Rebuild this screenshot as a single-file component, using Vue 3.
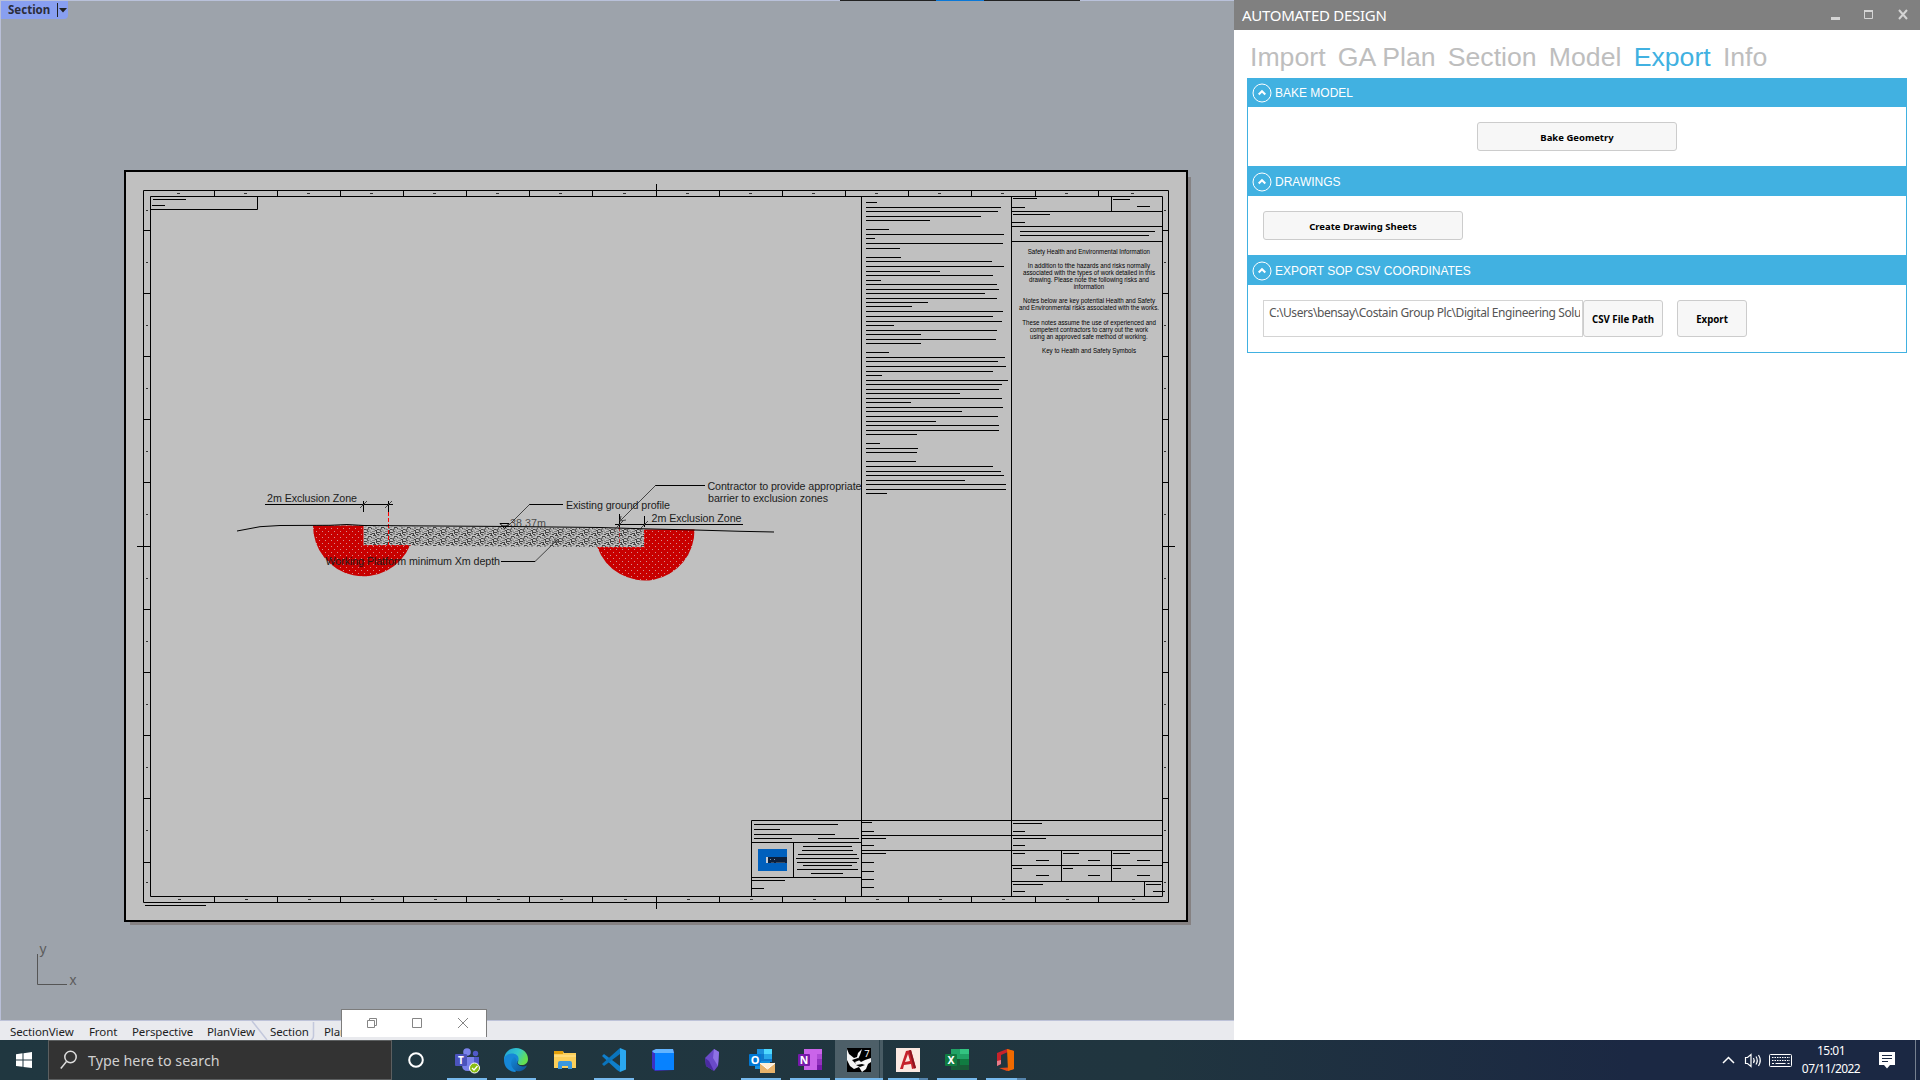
<script setup>
// Column and row divisions of the sheet border
const colTicks = [214, 277, 340, 403, 466, 529, 592, 656, 719, 782, 845, 908, 971, 1035, 1098]
const colMarks = [179, 246, 309, 372, 435, 498, 561, 625, 688, 751, 814, 877, 940, 1003, 1067, 1133]
const rowTicks = [230, 293, 356, 419, 482, 546, 609, 672, 735, 798, 862]
const rowMarks = [210, 262, 325, 388, 451, 514, 578, 641, 704, 767, 830, 882]

// Greeked note lines: [y, x start, x end]
const notes = [
  [202, 866, 877], [207, 866, 1001], [211, 866, 998], [216, 866, 981], [220, 866, 930],
  [229, 866, 889], [234, 866, 1004], [238, 866, 875], [243, 866, 1003], [248, 866, 900],
  [257, 866, 901], [261, 866, 992], [266, 866, 1004], [271, 866, 940], [275, 866, 993],
  [280, 866, 881], [284, 866, 997], [289, 866, 999], [293, 866, 985], [298, 866, 997],
  [302, 866, 928], [306, 866, 912], [311, 866, 1003], [316, 866, 993], [321, 866, 1002],
  [325, 866, 894], [330, 866, 997], [334, 866, 921], [339, 866, 996], [343, 866, 921],
  [352, 866, 889], [357, 866, 1005], [361, 866, 998], [366, 866, 1006], [371, 866, 993],
  [375, 866, 882], [380, 866, 1008], [384, 866, 1002], [389, 866, 999], [393, 866, 960],
  [398, 866, 1002], [402, 866, 911], [407, 866, 1003], [411, 866, 962], [416, 866, 998],
  [421, 866, 936], [425, 866, 999], [430, 866, 999], [434, 866, 917],
  [443, 866, 880], [448, 866, 918], [452, 866, 917],
  [461, 866, 916], [466, 866, 993], [471, 866, 1001], [475, 866, 1004], [480, 866, 965],
  [484, 866, 1006], [489, 866, 1006], [493, 866, 887],
]
const fields = [
  [199, 153, 186], [205, 152, 165], [905, 145, 206],
  [198, 1013, 1037], [207, 1012, 1025], [199, 1113, 1130], [206, 1137, 1150],
  [214, 1013, 1050], [222, 1012, 1025], [231, 1020, 1155], [235, 1020, 1149],
  [824, 754, 838], [829, 754, 780], [834, 754, 835], [838, 754, 792], [838, 818, 859],
  [846, 803, 852], [850, 802, 853], [854, 798, 857], [858, 796, 859], [862, 797, 857],
  [865, 803, 852], [869, 797, 858], [873, 811, 843], [880, 752, 785], [888, 752, 764],
  [822, 862, 872], [831, 862, 874], [838, 862, 886], [845, 862, 874], [853, 862, 886],
  [862, 862, 874], [871, 862, 874], [879, 862, 874], [887, 862, 874],
  [823, 1013, 1042], [831, 1013, 1025], [838, 1013, 1046], [845, 1013, 1025],
  [853, 1013, 1025], [853, 1063, 1079], [853, 1113, 1130],
  [860, 1036, 1049], [860, 1088, 1100], [860, 1137, 1150],
  [868, 1013, 1022], [868, 1063, 1073], [868, 1113, 1121],
  [875, 1036, 1049], [875, 1088, 1100], [875, 1137, 1150],
  [884, 1013, 1043], [891, 1013, 1025], [884, 1146, 1161], [891, 1153, 1165],
]
const safety = [
  [254, 1027.7, 122.3, 'Safety Health and Environmental Information'],
  [268, 1027.7, 122.3, 'In addition to tthe hazards and risks normally'],
  [275.3, 1023, 132, 'associated with the types of work detailed in this'],
  [282.3, 1029, 120, 'drawing. Please note the following risks and'],
  [289.3, 1073.7, 30.5, 'information'],
  [303.3, 1023, 132, 'Notes below are key potential Health and Safety'],
  [310.3, 1019, 140, 'and Environmental risks associated with the works.'],
  [324.6, 1022.3, 133.7, 'These notes assume the use of experienced and'],
  [331.6, 1029.7, 118.3, 'competent contractors to carry out the work'],
  [338.9, 1030, 117.7, 'using an approved safe method of working.'],
  [352.9, 1042, 94, 'Key to Health and Safety Symbols'],
]
const dash = (list) => list.map(([y, a, b]) => `M${a} ${y}.5H${b}`).join('')
const colPath = colTicks.map((x) => `M${x}.5 190V197M${x}.5 896V902`).join('')
const rowPath = rowTicks.map((y) => `M143 ${y}.5H150M1162 ${y}.5H1168`).join('')
const markPath =
  colMarks.map((x) => `M${x - 2} 193.5h3M${x - 1} 899.5h3`).join('') +
  rowMarks.map((y) => `M146 ${y}.5h2M1164 ${y}.5h2`).join('')

const tabs = ['Import', 'GA Plan', 'Section', 'Model', 'Export', 'Info']
const views = [
  ['SectionView', 79], ['Front', 43], ['Perspective', 75], ['PlanView', 63], ['Section', 54], ['Plan', 30],
]
const apps = [
  { id: 'cortana' }, { id: 'teams', open: true }, { id: 'edge', open: true }, { id: 'files' },
  { id: 'code', open: true }, { id: 'cube' }, { id: 'gem' }, { id: 'outlook', open: true },
  { id: 'onenote', open: true }, { id: 'rhino', open: true, active: true },
  { id: 'acad', open: true, stack: true }, { id: 'excel', open: true }, { id: 'office', open: true, stack: true },
]
</script>

<template>
  <div class="screen">
    <div class="work">
      <section class="viewport">
        <div class="edge-strip"><i></i><b></b><i></i></div>
        <svg class="canvas" width="1234" height="1019" viewBox="0 1 1234 1019">
          <defs>
            <pattern id="dots" width="6" height="6" patternUnits="userSpaceOnUse">
              <rect width="6" height="6" fill="#c80000" />
              <path d="M1 0h1v1h-1zM4 3h1v1h-1z" fill="#d39090" />
            </pattern>
            <pattern id="hatch" width="13" height="9" patternUnits="userSpaceOnUse">
              <path d="M0 1.5h3l2 2M6 .5l2 2h3M12.500 0v3M1 5.5l2-2M4 5.5h3l1 2M9 4.5h3M0 7.5h2l2 1.500M6 8.500l-1-1M9 6.500l2 2h2M10.500 3v2M3 0l2 1M0 3.500h2M6 3.500h2M5 6.500l-2 1M12 5v2M8 0h3" fill="none" stroke="#444" stroke-width="1" />
            </pattern>
            <clipPath id="drawing"><rect x="150" y="196" width="711" height="700" /></clipPath>
          </defs>
          <path d="M1188 177h3v748H130v-3h1058z" fill="#858182" />
          <rect x="125" y="171" width="1062" height="750" fill="#c0c0c0" stroke="#000" stroke-width="2" />

          <g class="ink">
            <path d="M143.5 190.500H1168.500V902.500H143.500zM150.500 196.500H1162.500V896.500H150.500z" />
            <path :d="colPath + rowPath" />
            <path d="M656.500 184V197M656.500 896V909M137 546.500H150M1162 546.500H1175" />
            <path d="M150 209.500H257.500V196" />
            <path d="M861.500 196V896M1011.500 196V896M1011 211.500H1162M1111.500 196V211M1011 226.500H1162M1011 241.500H1162" />
            <path d="M751.500 896V820.500H1162M861 835.500H1162M861 850.500H1162M751 842.500H861M751 877.500H861M793.500 842V877" />
            <path d="M1011 865.500H1162M1011 881.500H1162M1061.500 850V881M1111.500 850V881M1144.500 881V896" />
            <path :d="dash(notes)" /><path :d="dash(fields)" />
            <path :d="markPath" opacity=".75" />
          </g>
          <rect x="758" y="849" width="29" height="22" fill="#0060bd" />
          <path d="M766 857h2v6h-2z" fill="#c8ccd2" />
          <path d="M768 857h19v6h-19z" fill="#0c203c" />
          <path d="M770 859h1v1h-1zM774 859h1v1h-1z" fill="#8895a8" />
          <path d="M771 862h3v1h-3zM776 862h9v1h-9z" fill="#3c4b62" />

          <g class="safety">
            <text v-for="s in safety" :key="s[0]" :x="s[1]" :y="s[0]" :textLength="s[2]" lengthAdjust="spacingAndGlyphs">{{ s[3] }}</text>
          </g>

          <g clip-path="url(#drawing)">
            <path d="M313 525.500H363.500V545.500H410A50.500 50.500 0 0 1 313 525.500z" fill="url(#dots)" />
            <path d="M644.500 529.500H694.500A50 50 0 0 1 597.500 547.500H644.500z" fill="url(#dots)" />
            <path d="M364 526.500L644 528.500V547.500L364 545.500z" fill="url(#hatch)" />
            <path d="M388.500 512V545" stroke="#f00" stroke-dasharray="4 2" />
            <path d="M619.500 515V547" stroke="#a33" stroke-dasharray="4 2" />
            <path d="M364.500 545.500h46M644.500 530v17.500h-47" fill="none" stroke="#e00000" stroke-dasharray="3 1.500" />
            <path class="line" d="M237 531L260 526.700L280 525.500L330 525.300L347 524.500L364 525.500L510 526.500L600 527.500L644 528.800L695 530L740 531.300L774 532" />
            <g class="line">
              <path d="M265 504.500H393M363.500 501V512M388.500 501V512M615 524.500H743M619.500 514V527M644.500 516V527" />
              <path d="M529 504.500H563M655 485.500H705M501 561.500H535" />
            </g>
            <g class="thin">
              <path d="M360 508l7-7M385 508l7-7M616 528l7-7M641 528l7-7" />
              <path d="M529.500 504.500L508 526M655.500 485.500L620 521M620 521l1-5M620 521l6-1M535 561.500L556 541M554 539l5 3h-7" />
              <path d="M500 523.500h9l-4.500 5zM502 526h5" stroke="#000" />
            </g>
            <g class="label">
              <text x="267" y="502" textLength="90">2m Exclusion Zone</text>
              <text x="325.500" y="565" textLength="174.500">Working Platform minimum Xm depth</text>
              <text x="510" y="527" textLength="36" fill-opacity=".75">38.37m</text>
              <text x="566" y="508.500" textLength="104">Existing ground profile</text>
              <text x="707.500" y="490" textLength="154">Contractor to provide appropriate</text>
              <text x="708" y="502" textLength="120">barrier to exclusion zones</text>
              <text x="651.500" y="521.500" textLength="90">2m Exclusion Zone</text>
            </g>
          </g>

          <path d="M37.500 954V984.500H67" fill="none" stroke="#555" />
          <g class="axis"><text x="39.500" y="954">y</text><text x="69.500" y="985">x</text></g>
        </svg>
        <div class="chip"><span>Section</span><svg width="11" height="16"><path d="M.5 1v14" stroke="#222" /><path d="M2 6h8l-4 4.500z" fill="#222" /></svg></div>
        <nav class="views">
          <span v-for="(v, i) in views" :key="i" :style="{ width: v[1] + 'px' }">{{ v[0] }}</span>
          <svg class="divider" width="80" height="19" fill="none" stroke="#c3c8dc" stroke-width="1.500"><path d="M1 0L16 19M62.500 1V15Q62.500 18 60 19" /></svg>
        </nav>
        <div class="popup">
          <svg width="144" height="28" fill="none" stroke="#858585">
            <path d="M25.500 10.500h7v7h-7zM27.500 10.500v-2h7v7h-2M70.500 8.500h9v9h-9zM116 8l10 10M126 8l-10 10" />
          </svg>
        </div>
      </section>

      <aside class="panel">
        <header class="titlebar">
          <h1>AUTOMATED DESIGN</h1>
          <svg width="80" height="14" fill="none" stroke="#d4d4d4">
            <path d="M1 10.500h9" stroke-width="3" /><path d="M34.500 2.500h8v8h-8z" /><path d="M34 3h9" stroke-width="2" />
            <path d="M69 2l8 9M77 2l-8 9" stroke-width="2" />
          </svg>
        </header>
        <nav class="tabs"><span v-for="t in tabs" :key="t" :class="{ on: t === 'Export' }">{{ t }}</span></nav>
        <div class="groups">
          <h2 class="first"><svg class="chev" viewBox="0 0 20 20"><circle cx="10" cy="10" r="9" /><path d="M6.700 11.500L10 8.200l3.300 3.300" /></svg>BAKE MODEL</h2>
          <div class="body centered"><button class="wide">Bake Geometry</button></div>
          <h2><svg class="chev" viewBox="0 0 20 20"><circle cx="10" cy="10" r="9" /><path d="M6.700 11.500L10 8.200l3.300 3.300" /></svg>DRAWINGS</h2>
          <div class="body"><button class="wide">Create Drawing Sheets</button></div>
          <h2><svg class="chev" viewBox="0 0 20 20"><circle cx="10" cy="10" r="9" /><path d="M6.700 11.500L10 8.200l3.300 3.300" /></svg>EXPORT SOP CSV COORDINATES</h2>
          <div class="body last">
            <div class="path"><span>C:\Users\bensay\Costain Group Plc\Digital Engineering Solu</span></div>
            <button class="csv">CSV File Path</button>
            <button class="export">Export</button>
          </div>
        </div>
      </aside>
    </div>

    <footer class="taskbar">
      <div class="start"><svg width="16" height="16" fill="#fff"><path d="M0 2.200L6.500 1.300V7.500H0zM7.500 1.200L16 0V7.500H7.500zM0 8.500H6.500V14.800L0 13.900zM7.500 8.500H16V16L7.500 14.900z" /></svg></div>
      <div class="search">
        <svg width="18" height="20" fill="none" stroke="#ddd" stroke-width="1.500"><circle cx="10.500" cy="7" r="5.700" /><path d="M6.500 11.500L.8 18.500" /></svg>
        <span>Type here to search</span>
      </div>
      <div class="apps">
        <div v-for="a in apps" :key="a.id" class="app" :class="{ open: a.open, active: a.active, stack: a.stack, first: a.id === 'cortana' }">
          <svg v-if="a.id === 'cortana'" viewBox="0 0 26 26"><circle cx="13" cy="13" r="6.800" fill="none" stroke="#fff" stroke-width="2" /></svg>
          <svg v-else-if="a.id === 'teams'" viewBox="0 0 26 26">
            <circle cx="21.500" cy="6.500" r="2.700" fill="#5059c9" /><path d="M17 10h8v7q0 4-4 4h-4z" fill="#5059c9" />
            <circle cx="13" cy="5" r="3.800" fill="#7b83eb" /><path d="M8 10h12v8q0 6-6 6t-6-6z" fill="#7b83eb" />
            <rect x="1" y="7" width="12" height="12" rx="1" fill="#4b53bc" /><text x="7" y="17" class="glyph" font-size="10">T</text>
            <circle cx="20.500" cy="21" r="5" fill="#8abd16" stroke="#fff" /><path d="M18 21l2 2 3.500-4" fill="none" stroke="#fff" stroke-width="1.300" />
          </svg>
          <svg v-else-if="a.id === 'edge'" viewBox="0 0 26 26">
            <defs>
              <linearGradient id="e1" x2="1" y2=".4"><stop stop-color="#1f9fd8" /><stop offset=".6" stop-color="#34c8cb" /><stop offset="1" stop-color="#65df50" /></linearGradient>
              <linearGradient id="e2" x2="1" y2="1"><stop stop-color="#1289d8" /><stop offset="1" stop-color="#115092" /></linearGradient>
            </defs>
            <path d="M1 13C1 5 7 1 13 1c7 0 12 5 12 11 0 4-3 6-6 6-3 0-4.500-1-4-3 1-3-1-5-4-5z" fill="url(#e1)" />
            <path d="M1 13C1 9 5 6.500 9 6.500c4 0 7 2.500 6.500 6-.2 1-1 1.500-1 3l-2 9.400C6 25 1 20 1 13z" fill="#1687d7" />
            <path d="M11 10c-6 5-2 15 6 14.300 3-.6 6-3 7-5.800-5 2.500-11 0-10.500-5 .1-1.500-.8-3-2.500-3.500z" fill="url(#e2)" />
          </svg>
          <svg v-else-if="a.id === 'files'" viewBox="0 0 26 26">
            <path d="M2 4h9l1 2h12v15H2z" fill="#fccf5a" /><path d="M2 4h9v3H2z" fill="#e3a00b" /><path d="M2 8h22v2H2z" fill="#ffdb78" />
            <path d="M6 22v-6q0-2 2-2h10q2 0 2 2v6h-4v-3h-6v3z" fill="#3b97de" />
          </svg>
          <svg v-else-if="a.id === 'code'" viewBox="0 0 26 26">
            <path d="M3 7L1 9l15 14 3 2v-6z" fill="#0f7fcc" /><path d="M19 1L1 17l2 2L19 7z" fill="#0a74bd" /><path d="M19 1l6 2.500v19L19 25z" fill="#2aa7ef" />
          </svg>
          <svg v-else-if="a.id === 'cube'" viewBox="0 0 26 26">
            <path d="M2 4l4-2h17l1 4v17l-19 1-3-3z" fill="#3c2fc4" /><path d="M2 4l4-2h17l1 4H4z" fill="#62b4ff" /><path d="M5 6h19v17H5z" fill="#0782ff" />
          </svg>
          <svg v-else-if="a.id === 'gem'" viewBox="0 0 26 26">
            <path d="M15 2l5 3-1 14-4 5-8-5-1-8z" fill="#6a4ac8" /><path d="M15 2l5 3-1 14-5-8z" fill="#8e72e4" /><path d="M6 11l4 3 5 10-8-5z" fill="#4a2ba0" />
          </svg>
          <svg v-else-if="a.id === 'outlook'" viewBox="0 0 26 26">
            <path d="M9 2h15v13H9z" fill="#0f78cc" /><path d="M9 2h7v5H9z" fill="#1b8fdc" /><path d="M16 2h8v5h-8z" fill="#50d9ff" /><path d="M16 7h8v5h-8z" fill="#28a8ea" /><path d="M7 14h15v8H7z" fill="#1490df" />
            <rect x="1" y="7" width="12" height="12" rx="1" fill="#0078d4" /><text x="7" y="17" class="glyph" font-size="11">O</text>
            <path d="M12 16h15v10H12z" fill="#e8b36b" /><path d="M12 16l7.500 6L27 16" fill="#fff0d8" stroke="#fff" />
          </svg>
          <svg v-else-if="a.id === 'onenote'" viewBox="0 0 26 26">
            <path d="M7 2h18v21H7z" fill="#ca64ea" /><path d="M20 7h5v5h-5z" fill="#ae4bd5" /><path d="M20 12h5v6h-5z" fill="#9332bf" /><path d="M20 18h5v5h-5z" fill="#7719aa" />
            <rect x="1" y="7" width="12" height="12" rx="1" fill="#7719aa" /><text x="7" y="17" class="glyph" font-size="10.500">N</text>
          </svg>
          <svg v-else-if="a.id === 'rhino'" viewBox="0 0 26 26">
            <path d="M1 1h24v24H1z" fill="#000" />
            <path d="M1 2l2 5 5 4 3-1 1-4 4-4-2 6-2 4 3 3 4-2 6-2v4l-3 2-2 5-4 3-3-5-5 2-4-3-3-6z" fill="#f5f5f5" />
            <path d="M6 13l6-2 2 2-5 2 1 2zM10 18l6-1 3 1-5 2z" fill="#000" /><text x="21" y="9.500" font-size="9.500" fill="#fff" text-anchor="middle">7</text>
          </svg>
          <svg v-else-if="a.id === 'acad'" viewBox="0 0 26 26">
            <path d="M1 1h24v24H1z" fill="#fbe9e2" /><path d="M5 22L11 4l5-1 5 18-4 1-1-5-7 1-1 4z" fill="#c5222c" /><path d="M13 7l2 7-5 1z" fill="#fbe9e2" /><path d="M16 3l5 18-2 .5L14 3.500z" fill="#8d1520" />
          </svg>
          <svg v-else-if="a.id === 'excel'" viewBox="0 0 26 26">
            <path d="M7 2h18v21H7z" fill="#21a366" /><path d="M16 2h9v5h-9z" fill="#33c481" /><path d="M7 12h9v11H7z" fill="#185c37" /><path d="M16 12h9v6h-9z" fill="#107c41" /><path d="M16 18h9v5h-9z" fill="#185c37" />
            <rect x="1" y="7" width="12" height="12" rx="1" fill="#107c41" /><text x="7" y="17" class="glyph" font-size="10.500">X</text>
          </svg>
          <svg v-else viewBox="0 0 26 26">
            <path d="M14 2l7 2v18l-7 2-8-3 9-.5V5z" fill="#e64a19" /><path d="M14 2L4 6v13l4-2V8l7-3z" fill="#c8222a" /><path d="M14 2l7 2v18l-6 2z" fill="#f06a00" /><path d="M4 14l4-1v4l-4 2z" fill="#e87c8a" />
          </svg>
        </div>
      </div>
      <div class="tray">
        <svg width="74" height="20" fill="none" stroke="#fff" stroke-width="1.200">
          <path d="M1 13l5.500-5.500L12 13" stroke-width="1.500" />
          <path d="M23.500 7.500h2l3.500-3v12l-3.500-3h-2zM31.500 8q1.500 2.500 0 5M34 6.500q2.500 4 0 8M36.500 5q3.500 5.500 0 11" />
          <rect x="47.500" y="4.500" width="22" height="12" rx="1" stroke-width="1" /><path d="M50 7.500h18M50 10.500h18" stroke-dasharray="1.500 1" /><path d="M50 13.500h2M53.500 13.500h10M65.500 13.500h2" />
        </svg>
        <div class="clock"><span>15:01</span><span>07/11/2022</span></div>
        <svg class="note" width="16" height="17"><path d="M0 0h16v13h-5l-3 3.500L5 13H0z" fill="#fff" /><path d="M3 3.500h10M3 6.500h10M3 9.500h6" stroke="#1b2943" /></svg>
        <i class="peek"></i>
      </div>
    </footer>
  </div>
</template>

<style>
body { overflow: hidden; }
</style>

<style scoped>
.screen { width: 1920px; height: 1080px; display: flex; flex-direction: column; font-family: "Noto Sans", "Open Sans", sans-serif; overflow: hidden; }
.work { height: 1040px; display: flex; }
.viewport { position: relative; width: 1234px; height: 1040px; display: flex; flex-direction: column; background: #9da3ab; box-shadow: inset 1px 0 #b9bfd8; }
.edge-strip { height: 1px; background: #b9c1da; display: flex; padding-left: 840px; }
.edge-strip i { width: 96px; background: #222; }
.edge-strip b { width: 48px; background: #0a78d8; }
.canvas { display: block; flex: none; }
.ink, .line { fill: none; stroke: #000; stroke-width: 1; }
.thin { fill: none; stroke: #444; stroke-width: 1; }
.safety { font: 6.500px "Liberation Sans", Arial, sans-serif; fill: #000; }
.label { font: 10.700px "Liberation Sans", Arial, sans-serif; fill: #1c1c1c; }
.axis { font: 14px "Liberation Sans", Arial, sans-serif; fill: #5c5c5c; }
.chip { position: absolute; left: 1px; top: 1px; width: 67px; height: 18px; box-sizing: border-box; padding-left: 7px; display: flex; align-items: center; gap: 6px; background: #889ff0; border-radius: 0 0 4px 0; font-weight: 700; font-size: 11.500px; line-height: 18px; color: #2b2d3a; }
.chip span { width: 43px; }
.views { position: relative; height: 20px; box-sizing: border-box; display: flex; padding-left: 10px; background: #e9eaee; border-top: 1px solid #bdc2d8; font-size: 11.500px; line-height: 21px; color: #1e1e1e; letter-spacing: -.1px; }
.views span { flex: none; white-space: nowrap; }
.divider { position: absolute; left: 251px; top: 0; }
.popup { position: absolute; left: 341px; top: 1009px; width: 144px; height: 27px; border: 1px solid #7c7c7c; border-bottom: 0; background: #fff; }
.popup svg { display: block; }

.panel { width: 686px; background: #fff; display: flex; flex-direction: column; }
.titlebar { height: 30px; background: #808080; display: flex; align-items: center; justify-content: space-between; padding: 0 10px 0 8px; }
.titlebar h1 { margin: 0; font-weight: 400; font-size: 15px; letter-spacing: -.27px; color: #fff; }
.tabs { height: 48px; display: flex; gap: 12.200px; padding-left: 16px; font: 26.670px/55px "Liberation Sans", Arial, sans-serif; color: #bebebe; box-sizing: border-box; }
.tabs span { white-space: nowrap; }
.tabs .on { color: #41b1e1; }
.groups { margin: 0 13px; width: 660px; box-sizing: border-box; border: 1px solid #41b1e1; border-top: 0; }
.groups h2 { margin: 0; height: 30px; box-sizing: border-box; padding: 1px 0 0 4px; display: flex; align-items: center; gap: 3px; background: #41b1e1; color: #fff; font: 12px "Liberation Sans", Arial, sans-serif; }
.groups h2.first { height: 29px; padding-top: 0; }
.chev { width: 20px; height: 20px; fill: none; stroke: #fff; }
.chev path { stroke-width: 2; }
.body { height: 59px; box-sizing: border-box; padding: 15px 15px 0; display: flex; align-items: flex-start; }
.centered { justify-content: center; }
.last { height: 67px; }
button { box-sizing: border-box; height: 29px; padding: 1px 0 0; border: 1px solid #ccc; border-radius: 3px; background: #f7f7f7; color: #000; font: 700 9.500px "Noto Sans", sans-serif; white-space: nowrap; }
.wide { width: 200px; height: 29px; }
.path { width: 320px; height: 37px; box-sizing: border-box; border: 1px solid #d4d4d4; padding: 0 2px 0 5px; font-size: 12px; line-height: 24px; color: #555; }
.path span { display: block; overflow: hidden; white-space: nowrap; height: 26px; letter-spacing: -.42px; }
.csv { width: 80px; height: 37px; padding-top: 2px; font-size: 9.700px; }
.export { width: 70px; height: 37px; margin-left: 14px; padding-top: 2px; font-size: 9.700px; }

.taskbar { height: 40px; display: flex; background: linear-gradient(90deg, #203740, #20353f 60%, #1b2843 85%); color: #fff; }
.start { width: 48px; display: flex; align-items: center; justify-content: center; }
.search { width: 344px; box-sizing: border-box; border: 1px solid #5c5f60; background: #333; display: flex; align-items: center; padding-left: 11px; gap: 10px; font-size: 14.300px; color: #d0d0d0; }
.apps { display: flex; padding-left: 1px; }
.app { position: relative; width: 49px; height: 40px; display: flex; align-items: center; justify-content: center; }
.app.first svg { margin-right: 3px; }
.app svg { width: 26px; height: 26px; overflow: visible; font-family: "Noto Sans", sans-serif; }
.app.open::after { content: ""; position: absolute; left: 5px; bottom: 0; width: 40px; height: 2px; background: #76b9ed; }
.app.active { background: linear-gradient(90deg, transparent 1px, #4d5f68 1px 45px, #2c424b 45px 46px, #485b64 46px 49px, transparent 49px); }
.app.active::after { left: 1px; width: 48px; }
.app.stack::after { background: linear-gradient(90deg, #76b9ed 31px, #5584ac 31px); }
.glyph { fill: #fff; font-weight: 700; text-anchor: middle; }
.tray { margin-left: auto; display: flex; align-items: center; }
.clock { width: 74px; display: flex; flex-direction: column; align-items: center; font-size: 12px; line-height: 18px; letter-spacing: -.55px; margin: 0 11px 0 -2px; }
.note { margin-right: 20px; }
.peek { width: 1px; height: 40px; background: #76808f; margin-right: 4px; }
</style>
